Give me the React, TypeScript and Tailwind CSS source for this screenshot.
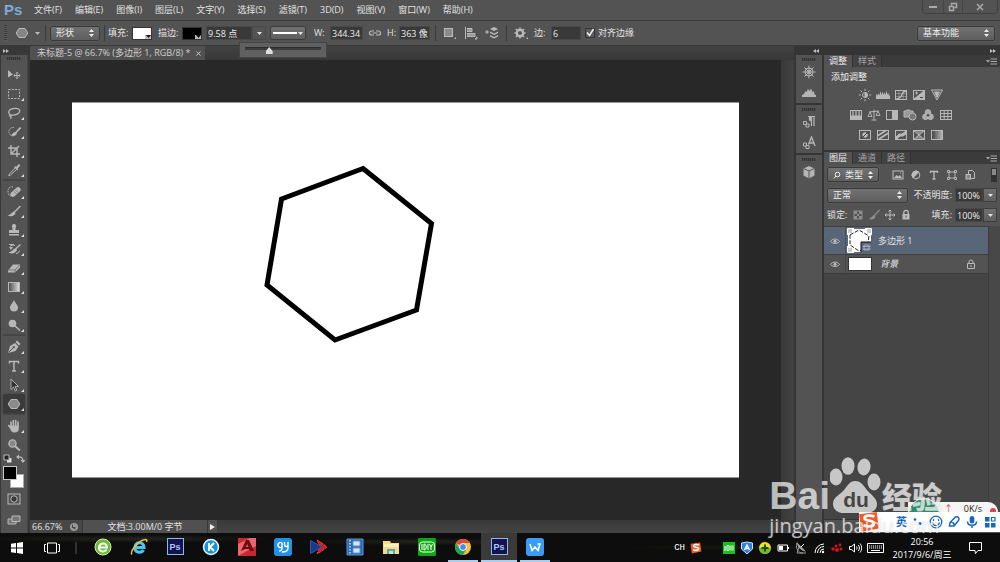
import { useState, type ReactNode } from "react";

const Svg = ({
  children,
  className = "size-[14px]",
  box = "0 0 14 14",
}: {
  children: ReactNode;
  className?: string;
  box?: string;
}) => (
  <svg
    viewBox={box}
    className={`shrink-0 ${className}`}
    fill="none"
    stroke="currentColor"
    aria-hidden="true"
  >
    {children}
  </svg>
);

const menus = [
  "文件(F)",
  "编辑(E)",
  "图像(I)",
  "图层(L)",
  "文字(Y)",
  "选择(S)",
  "滤镜(T)",
  "3D(D)",
  "视图(V)",
  "窗口(W)",
  "帮助(H)",
];

type Tool = { name: string; icon: ReactNode; more?: boolean };

const toolGroups: Tool[][] = [
  [
    {
      name: "移动工具",
      icon: (
        <>
          <path d="M1 2l5 4.500-5 3z" fill="currentColor" stroke="none" />
          <path d="M10 4.500v6M7 7.500h6M9 5.500l1-1.200 1 1.200M9 9.500l1 1.200 1-1.200M8 6.500l-1.200 1 1.200 1M12 6.500l1.200 1-1.200 1" />
        </>
      ),
    },
    {
      name: "矩形选框工具",
      more: true,
      icon: <rect x="1.500" y="2.500" width="11" height="9" strokeDasharray="2 1.300" />,
    },
    {
      name: "套索工具",
      more: true,
      icon: (
        <path
          d="M3.500 9C1 7.500 1 4.500 4 3.200S12 2 12.700 4.500 10 8.800 6 9.200c-2 .2-3.300-.4-3.300.5s1.500.6 1.500 1.700-1 1.300-1 1.300"
          strokeWidth="1.300"
        />
      ),
    },
    {
      name: "快速选择工具",
      more: true,
      icon: (
        <>
          <path d="M7 2.500A4.300 4.300 0 1 0 6.500 11" strokeDasharray="1.500 1" />
          <path d="M13.500 2.500L8.500 8" strokeWidth="1.700" />
          <path d="M9 7c-2 0-3 .8-5 3.500 3 1 5 .3 6-2.500z" fill="currentColor" stroke="none" />
        </>
      ),
    },
    {
      name: "裁剪工具",
      more: true,
      icon: <path d="M4 1v9h9M1 4h9v9M5 9l7-7" strokeWidth="1.400" />,
    },
    {
      name: "吸管工具",
      more: true,
      icon: (
        <>
          <path d="M8 5l-5.500 6-.8 1.800 1.800-.8L9.500 6.500" />
          <path d="M7 4l1-.8 1.300.6 2-2.300c1-1 2.600.5 1.700 1.500l-2.300 2.200.5 1.300-.9 1z" fill="currentColor" stroke="none" />
        </>
      ),
    },
  ],
  [
    {
      name: "污点修复画笔工具",
      more: true,
      icon: (
        <>
          <path d="M6 2C3 1 .5 3.500 1 7s2 4 3 4" strokeDasharray="1.500 1" />
          <rect x="2.500" y="4.500" width="12" height="5" rx="2.500" transform="rotate(-42 8.500 7)" fill="currentColor" stroke="none" />
          <path d="M7 6.500l2.500 2.500M8.500 5L11 7.500" stroke="#666" strokeWidth=".8" />
        </>
      ),
    },
    {
      name: "画笔工具",
      more: true,
      icon: (
        <>
          <path d="M13.500 2L7 8.500" strokeWidth="1.500" />
          <path d="M7.500 7.500C5 7.500 4.500 10.500.5 11.500c3 1.300 7 1 8-2.500z" fill="currentColor" stroke="none" />
        </>
      ),
    },
    {
      name: "仿制图章工具",
      more: true,
      icon: (
        <path
          d="M7 1a2 2 0 0 1 1.900 3L8.300 7H12v3H2V7h3.700l-.6-3A2 2 0 0 1 7 1zM2 11h10v1.500H2z"
          fill="currentColor"
          stroke="none"
        />
      ),
    },
    {
      name: "历史记录画笔工具",
      more: true,
      icon: (
        <>
          <path d="M2 2.500h5M3 4.500c1-1.500 3-1.500 5-1M9 11.500c2 0 3-1 3.500-3" />
          <path d="M13.500 2.500L8 7.500" strokeWidth="1.500" />
          <path d="M9 6.500c-3 0-3.500 3-7.500 4 3 1.600 7 1.200 8.500-2.500zM2 5h4L4 8z" fill="currentColor" stroke="none" />
        </>
      ),
    },
    {
      name: "橡皮擦工具",
      more: true,
      icon: (
        <>
          <path d="M1 9.500l5-6h7v3l-5 5H1z" fill="currentColor" stroke="none" />
          <path d="M1.500 9H8l4.500-5M8 9v2.500" stroke="#666" strokeWidth=".8" />
        </>
      ),
    },
    {
      name: "渐变工具",
      more: true,
      icon: (
        <>
          <defs>
            <linearGradient id="toolGradient">
              <stop stopColor="#4a4a4a" />
              <stop offset="1" stopColor="#e0e0e0" />
            </linearGradient>
          </defs>
          <rect x="1.500" y="2.500" width="11" height="9" fill="url(#toolGradient)" />
        </>
      ),
    },
    {
      name: "模糊工具",
      more: true,
      icon: <path d="M7 1c1 3 4 5 4 7.500a4 4 0 0 1-8 0C3 6 6 4 7 1z" fill="currentColor" stroke="none" />,
    },
    {
      name: "减淡工具",
      more: true,
      icon: (
        <>
          <circle cx="5.500" cy="5.500" r="3.800" fill="currentColor" stroke="none" />
          <path d="M8 8l5 4.500" strokeWidth="1.600" />
        </>
      ),
    },
  ],
  [
    {
      name: "钢笔工具",
      more: true,
      icon: (
        <>
          <path d="M1 13l2-7 5-3 3.500 3.500-3 4.500zM8.500 2l1.500-1.500 3.500 3.500L12 5.500z" fill="currentColor" stroke="none" />
          <path d="M1.500 12.500L6.500 7.500" stroke="#555" />
          <circle cx="6.800" cy="7.200" r=".8" stroke="#555" />
        </>
      ),
    },
    {
      name: "横排文字工具",
      more: true,
      icon: <path d="M2.500 4.500V2.500h9v2M7 2.500v9.500M5 12h4" strokeWidth="1.500" />,
    },
    {
      name: "路径选择工具",
      more: true,
      icon: <path d="M4 1v10.500l2.500-2.300 1.800 3.800 1.500-.8L8 8.500h3.500z" fill="#333" strokeWidth=".9" />,
    },
    {
      name: "多边形工具",
      more: true,
      icon: <path d="M4 2.500h6L12.800 7 10 11.500H4L1.200 7z" fill="#8b8b8b" />,
    },
  ],
  [
    {
      name: "抓手工具",
      more: true,
      icon: (
        <>
          <path d="M4 7V3M6.300 6.500V1.500M8.700 6.500v-5M11 7V3M1.700 6.500L4 9.500" strokeWidth="1.600" strokeLinecap="round" />
          <path d="M3.200 6.500h8.600V10c0 2-1.500 3.500-4.300 3.500S3.500 11 3 9.500z" fill="currentColor" stroke="none" />
        </>
      ),
    },
    {
      name: "缩放工具",
      icon: (
        <>
          <circle cx="5.500" cy="5.500" r="3.600" fill="#888" strokeWidth="1.300" />
          <path d="M8.300 8.300l4.500 4.200" strokeWidth="2" />
        </>
      ),
    },
  ],
];

type Glyph = { name: string; icon: ReactNode };

const frame = <rect x="1.500" y="2.500" width="11" height="9" />;

const adjustments: Glyph[][] = [
  [
    {
      name: "亮度/对比度",
      icon: (
        <>
          <circle cx="7" cy="7" r="2.500" />
          <path d="M7 4.500a2.500 2.500 0 0 1 0 5z" fill="currentColor" />
          <path d="M7 .8v2M7 11.200v2M.8 7h2M11.200 7h2M2.600 2.600L4 4M10 10l1.400 1.400M2.600 11.400L4 10M10 4l1.400-1.400" />
        </>
      ),
    },
    {
      name: "色阶",
      icon: <path d="M0 11V7l1-1 .8 2L2.500 5l1 2.500L4.500 3l1 4 1-3.500 1 3.500L8.500 4l1 3L10.500 2.500l1 4 1-1.500.5 3 1-1v4z" fill="currentColor" stroke="none" />,
    },
    {
      name: "曲线",
      icon: (
        <>
          {frame}
          <path d="M5 2.500v9M9 2.500v9M1.500 5.500h11M1.500 8.500h11" strokeWidth=".5" />
          <path d="M2 11c4 0 5-2 6-4.500S10 3 12.500 3" strokeWidth="1.300" />
        </>
      ),
    },
    {
      name: "曝光度",
      icon: (
        <>
          {frame}
          <path d="M12.500 2.500v9h-11z" fill="currentColor" />
          <path d="M3 5h3M4.500 3.500v3" />
          <path d="M8 9.500h3" stroke="#444" />
        </>
      ),
    },
    {
      name: "自然饱和度",
      icon: (
        <>
          <path d="M1.500 2h11L7 12z" />
          <path d="M4.500 4h5L7 9.500z" fill="currentColor" />
        </>
      ),
    },
  ],
  [
    {
      name: "色相/饱和度",
      icon: (
        <>
          {frame}
          <path d="M1.500 8h11v3.500h-11z" fill="currentColor" />
          <path d="M4 3v5M7 3v5M10 3v5" strokeWidth="1.300" />
        </>
      ),
    },
    {
      name: "色彩平衡",
      icon: (
        <>
          <path d="M7 1.500v10M4.500 12h5M2 4l10-1" />
          <path d="M3 4L1 8.500h4zM11 3L9 7.500h4z" strokeWidth=".9" />
        </>
      ),
    },
    {
      name: "黑白",
      icon: (
        <>
          {frame}
          <path d="M7 3h5.500v8.500H7z" fill="currentColor" stroke="none" />
        </>
      ),
    },
    {
      name: "照片滤镜",
      icon: (
        <>
          <path d="M1 3h2l.7-1h3l.7 1H10v6H1z" fill="#999" />
          <circle cx="9.500" cy="8.500" r="3.500" fill="#777" />
        </>
      ),
    },
    {
      name: "通道混合器",
      icon: (
        <>
          <circle cx="7" cy="4.500" r="2.800" fill="#ababab" />
          <circle cx="4.500" cy="8.800" r="2.800" fill="#ababab" />
          <circle cx="9.500" cy="8.800" r="2.800" fill="#ababab" />
          <circle cx="7" cy="7.300" r="1.200" fill="#444" stroke="none" />
        </>
      ),
    },
    {
      name: "颜色查找",
      icon: (
        <>
          <rect x="1.500" y="2.500" width="11" height="9" />
          <path d="M5.200 2.500v9M8.800 2.500v9M1.500 5.500h11M1.500 8.500h11" />
        </>
      ),
    },
  ],
  [
    {
      name: "反相",
      icon: (
        <>
          {frame}
          <circle cx="7" cy="7" r="2.700" fill="#bbb" stroke="none" />
          <path d="M3 11l8-8" stroke="#444" />
        </>
      ),
    },
    {
      name: "色调分离",
      icon: (
        <>
          {frame}
          <path d="M2 7.500l8-5M3 11l9.500-6" strokeWidth="1.800" />
        </>
      ),
    },
    {
      name: "阈值",
      icon: (
        <>
          {frame}
          <path d="M2 9l3-3h3l4-3v3L9 8H6l-3 3H2z" fill="currentColor" />
        </>
      ),
    },
    {
      name: "可选颜色",
      icon: (
        <>
          {frame}
          <path d="M1.500 2.500L7 7l5.500-4.500zM1.500 11.500L7 7l5.500 4.500z" fill="#888" />
        </>
      ),
    },
    {
      name: "渐变映射",
      icon: (
        <>
          <defs>
            <linearGradient id="mapGradient">
              <stop stopColor="#404040" />
              <stop offset="1" stopColor="#b8b8b8" />
            </linearGradient>
          </defs>
          <rect x="1.500" y="2.500" width="11" height="9" fill="url(#mapGradient)" />
        </>
      ),
    },
  ],
];

const filters: Glyph[] = [
  {
    name: "像素图层滤镜",
    icon: (
      <>
        <rect x="2" y="3" width="10" height="8" />
        <path d="M3 10l2.500-3 2 1.500L9 7l2 3z" fill="currentColor" stroke="none" />
        <path d="M9 5h1" />
      </>
    ),
  },
  {
    name: "调整图层滤镜",
    icon: (
      <>
        <circle cx="7" cy="7" r="3.800" />
        <path d="M4 9.700a4 4 0 0 1 5.700-5.600z" fill="currentColor" />
      </>
    ),
  },
  { name: "文字图层滤镜", icon: <path d="M3.500 5V3.500h7V5M7 3.500v7.500M5.500 11h3" strokeWidth="1.300" /> },
  {
    name: "形状图层滤镜",
    icon: <path d="M4 4h6v6H4zM2.500 2.500h2v2h-2zM9.500 2.500h2v2h-2zM2.500 9.500h2v2h-2zM9.500 9.500h2v2h-2z" strokeWidth=".9" />,
  },
  {
    name: "智能对象滤镜",
    icon: (
      <>
        <path d="M5.500 6V2.500h4l2 2v6H8" />
        <rect x="3" y="6.500" width="4.500" height="4.500" fill="#888" />
      </>
    ),
  },
];

const locks: Glyph[] = [
  {
    name: "锁定透明像素",
    icon: (
      <>
        <rect x="3" y="3" width="8" height="8" />
        <path d="M3 3h3v3H3zM8 3h3v3H8zM6 6h2v2H6zM3 8h3v3H3zM8 8h3v3H8z" fill="currentColor" stroke="none" />
      </>
    ),
  },
  {
    name: "锁定图像像素",
    icon: (
      <>
        <path d="M12.500 2L7 8" strokeWidth="1.200" />
        <path d="M7.500 7C5 7.500 4.500 10 1.500 11c3 1 6 .5 7-2z" fill="currentColor" stroke="none" />
      </>
    ),
  },
  {
    name: "锁定位置",
    icon: <path d="M7 2v10M2 7h10M5.500 3.500L7 2l1.500 1.500M5.500 10.500L7 12l1.500-1.500M3.500 5.500L2 7l1.500 1.500M10.500 5.500L12 7l-1.500 1.500" className="text-[#bdbdbd]" stroke="currentColor" />,
  },
  {
    name: "锁定全部",
    icon: (
      <g className="text-[#bdbdbd]" stroke="currentColor">
        <path d="M4.800 6V4.500a2.200 2.200 0 0 1 4.400 0V6" strokeWidth="1.300" />
        <path d="M3.500 6h7v5.500h-7z" fill="currentColor" stroke="none" />
        <path d="M7 7.500v2" stroke="#444" />
      </g>
    ),
  },
];

const Divider = () => <span className="h-4 w-px shrink-0 border-l border-[#3b3b3b]" />;

const Grip = () => (
  <span className="mx-auto h-[3px] w-[14px] shrink-0 bg-[repeating-linear-gradient(90deg,#333_0_1px,#484848_1px_2px)]" />
);

const Picker = ({
  label,
  options,
  className,
  search,
}: {
  label: string;
  options: string[];
  className: string;
  search?: boolean;
}) => (
  <label
    className={`flex h-[15px] shrink-0 items-center rounded-xs border border-[#393939] bg-linear-to-b from-[#727272] to-[#5e5e5e] px-[5px] text-[#ececec] shadow-[0_0_1px_#8a8a8a] ${className}`}
  >
    {search && (
      <Svg className="mr-1 size-2" box="0 0 8 8">
        <circle cx="4.500" cy="3.500" r="2.300" />
        <path d="M3 5L.8 7.500" />
      </Svg>
    )}
    <select aria-label={label} className="min-w-0 flex-1 appearance-none bg-transparent p-0 leading-3 outline-none">
      {options.map((o) => (
        <option key={o}>{o}</option>
      ))}
    </select>
    <Svg className="h-2 w-[5px]" box="0 0 5 8">
      <path d="M0 3l2.500-3L5 3zM0 5l2.500 3L5 5z" fill="currentColor" stroke="none" />
    </Svg>
  </label>
);

const Field = ({ label, value, className }: { label: string; value: string; className: string }) => (
  <input
    aria-label={label}
    defaultValue={value}
    className={`h-[14px] min-w-0 shrink-0 border border-[#484848] bg-[#393939] px-px text-[#ececec] outline-none ${className}`}
  />
);

const Caret = ({ className = "" }: { className?: string }) => (
  <Svg className={`h-[3px] w-[5px] ${className}`} box="0 0 5 3">
    <path d="M0 0h5L2.500 3z" fill="currentColor" stroke="none" />
  </Svg>
);

const Swatch = ({ label, color }: { label: string; color: string }) => (
  <button
    aria-label={label}
    className={`flex h-[13px] w-5 shrink-0 items-end justify-end border border-[#333] ${color}`}
  >
    <span className="flex h-1 w-[6px] items-center justify-center bg-[#bbb] text-[#111]">
      <Caret />
    </span>
  </button>
);

const MenuBar = () => (
  <header className="flex h-[21px] shrink-0 items-center border-b border-[#3a3a3a] pl-1">
    <span className="w-[30px] font-['Liberation_Sans'] text-[15px] leading-5 font-bold text-[#7cabdc]">Ps</span>
    <nav className="flex items-center gap-[13px]">
      {menus.map((m) => (
        <button key={m} className="whitespace-nowrap">
          {m}
        </button>
      ))}
    </nav>
    <div className="mr-[2px] mb-[6px] ml-auto flex h-[14px] rounded-b-sm border border-t-0 border-[#404040] text-[#aaa]">
      <button aria-label="最小化" className="flex w-5 items-center justify-center">
        <span className="h-[2px] w-2 bg-current" />
      </button>
      <button aria-label="还原" className="flex w-5 items-center justify-center border-x border-[#444]">
        <Svg className="size-[10px]" box="0 0 10 10">
          <path d="M3.500 3.500v-2h5v4h-2M1.500 4.500h4v4h-4z" strokeWidth="1.500" />
        </Svg>
      </button>
      <button aria-label="关闭" className="flex w-[34px] items-center justify-center">
        <Svg className="size-2" box="0 0 8 8">
          <path d="M1 1l6 6M7 1L1 7" strokeWidth="1.600" />
        </Svg>
      </button>
    </div>
  </header>
);

const OptionsBar = () => (
  <div className="relative flex h-[25px] shrink-0 items-center border-b border-[#393939] pr-[5px] pl-1">
    <span className="h-4 w-[3px] bg-[repeating-linear-gradient(#3b3b3b_0_1px,#5c5c5c_1px_2px)]" />
    <button aria-label="多边形工具预设" className="ml-2 flex items-center gap-[6px] text-[#bbb]">
      <Svg>
        <path d="M4 2.500h6L12.800 7 10 11.500H4L1.200 7z" fill="#858585" />
      </Svg>
      <Caret />
    </button>
    <div className="ml-[5px] flex items-center gap-1">
      <Divider />
      <Picker label="工具模式" options={["形状", "路径", "像素"]} className="w-[50px]" />
      <Divider />
    </div>
    <span className="ml-[3px] w-[24px] whitespace-nowrap">填充:</span>
    <Swatch label="填充" color="bg-white" />
    <span className="ml-[6px] w-[24px] whitespace-nowrap">描边:</span>
    <Swatch label="描边" color="bg-black" />
    <div className="ml-1 flex">
      <Field label="描边宽度" value="9.58 点" className="w-[46px]" />
      <button aria-label="描边宽度滑块" className="flex w-[14px] items-center justify-center border border-[#484848]">
        <Caret />
      </button>
    </div>
    <button
      aria-label="描边类型"
      className="ml-1 flex h-[14px] w-9 items-center gap-px rounded-xs border border-[#3b3b3b] bg-linear-to-b from-[#727272] to-[#5e5e5e] px-[2px]"
    >
      <span className="h-[2px] flex-1 bg-white" />
      <Caret />
    </button>
    <label className="ml-2 flex items-center">
      <span className="w-4">W:</span>
      <Field label="宽度" value="344.34" className="w-[33px]" />
    </label>
    <button aria-label="链接宽高" className="mx-[5px] text-[#bbb]">
      <Svg>
        <path d="M6 5H3.500a2 2 0 0 0 0 4H6M8 5h2.500a2 2 0 0 1 0 4H8M4.500 7h5" strokeWidth="1.200" />
      </Svg>
    </button>
    <label className="flex items-center">
      <span className="w-3">H:</span>
      <Field label="高度" value="363 像素" className="w-[31px]" />
    </label>
    <div className="ml-[5px] flex items-center gap-[7px] text-[#bbb]">
      <Divider />
      <button aria-label="路径操作" className="flex items-end">
        <Svg>
          <rect x="1.500" y="2.500" width="8" height="8" fill="#8b8b8b" />
          <path d="M11 13h2v-2z" fill="currentColor" stroke="none" />
        </Svg>
      </button>
      <button aria-label="路径对齐方式">
        <Svg>
          <path d="M1.500 1v12" />
          <path d="M3 2h5v3.500H3zM3 7h8v3.500H3z" fill="#999" stroke="none" />
          <path d="M3 2.500h5v3H3M3 7.500h8v3H3M11 13h2v-2z" />
        </Svg>
      </button>
      <button aria-label="路径排列方式">
        <Svg>
          <path d="M0 6h4M2 4v4" />
          <path d="M9 1l4 2-4 2-4-2zM5 5.500l4 2 4-2v1.500L9 9 5 7zM5 9l4 2 4-2v1.500l-4 2-4-2z" fill="currentColor" stroke="none" />
        </Svg>
      </button>
      <Divider />
      <button aria-label="多边形选项">
        <Svg>
          <circle cx="6" cy="7" r="3.200" strokeWidth="2.200" />
          <path d="M6 1.500v2M6 10.500v2M.5 7h2M9.500 7h2M2 3l1.500 1.500M8.500 9.500L10 11M2 11l1.500-1.500M8.500 4.500L10 3" strokeWidth="1.600" />
          <path d="M12 13h2v-2z" fill="currentColor" stroke="none" />
        </Svg>
      </button>
    </div>
    <label className="ml-[6px] flex items-center">
      <span className="w-[17px] whitespace-nowrap">边:</span>
      <Field label="边数" value="6" className="w-[30px]" />
    </label>
    <label className="ml-1 flex items-center gap-[3px] whitespace-nowrap">
      <span className="relative flex size-[10px] items-center justify-center">
        <input type="checkbox" defaultChecked className="peer size-[10px] appearance-none border border-[#333] bg-[#5c5c5c]" />
        <Svg className="pointer-events-none absolute size-[10px] opacity-0 peer-checked:opacity-100" box="0 0 10 10">
          <path d="M2 4.500l2.500 3L8.500 1" stroke="#f0f0f0" strokeWidth="1.500" />
        </Svg>
      </span>
      对齐边缘
    </label>
    <div className="ml-auto">
      <Picker label="工作区" options={["基本功能"]} className="w-[78px]" />
    </div>
    {/* stroke width popup */}
    <div className="absolute top-[21px] left-[239px] z-10 flex h-4 w-[88px] items-start border border-[#444] bg-[#606060] px-[5px] pt-px">
      <input
        type="range"
        aria-label="描边宽度"
        defaultValue={30}
        className="h-[9px] w-full appearance-none bg-transparent [&::-webkit-slider-runnable-track]:h-[3px] [&::-webkit-slider-runnable-track]:border-t [&::-webkit-slider-runnable-track]:border-[#2e2e2e] [&::-webkit-slider-runnable-track]:bg-[#3c3c3c] [&::-webkit-slider-thumb]:-mt-px [&::-webkit-slider-thumb]:size-[7px] [&::-webkit-slider-thumb]:appearance-none [&::-webkit-slider-thumb]:bg-[#ddd] [&::-webkit-slider-thumb]:[clip-path:polygon(50%_0,100%_60%,100%_100%,0_100%,0_60%)]"
      />
    </div>
  </div>
);

const Toolbox = () => {
  const [active, setActive] = useState("多边形工具");

  return (
    <aside className="flex w-[30px] shrink-0 flex-col bg-[#383838] pr-[2px] pl-px text-[#b8b8b8]">
      <button aria-label="展开工具栏" className="flex h-[9px] items-center pl-[2px]">
        <Svg className="h-1 w-[6px]" box="0 0 6 4">
          <path d="M0 0l3 2-3 2zM3 0l3 2-3 2z" fill="currentColor" stroke="none" />
        </Svg>
      </button>
      <div className="flex flex-1 flex-col border-r border-[#444] bg-[#535353] px-[2px]">
        <div className="flex h-[10px] pt-[2px]">
          <Grip />
        </div>
        {toolGroups.map((group, i) => (
          <div key={i} className={i ? "border-t-2 border-[#464646] pt-px" : ""}>
            {group.map((t) => (
              <button
                key={t.name}
                aria-label={t.name}
                onClick={() => setActive(t.name)}
                className={`relative flex h-[19px] w-full items-center justify-center rounded-xs ${
                  active === t.name ? "bg-[#3a3a3a] shadow-[0_0_1px_#222]" : ""
                }`}
              >
                <Svg>{t.icon}</Svg>
                {t.more && (
                  <Svg className="absolute right-px bottom-[2px] size-[3px]" box="0 0 3 3">
                    <path d="M3 0v3H0z" fill="#ddd" stroke="none" />
                  </Svg>
                )}
              </button>
            ))}
          </div>
        ))}
        <div className="flex h-3 items-start justify-between">
          <button aria-label="默认前景色和背景色">
            <Svg className="size-[9px]" box="0 0 9 9">
              <path d="M4 4h4.500v4.500H4z" fill="#ddd" stroke="none" />
              <path d="M1 1h5v5H1z" fill="#222" />
            </Svg>
          </button>
          <button aria-label="切换前景色和背景色">
            <Svg className="size-[9px]" box="0 0 9 9">
              <path d="M2 3c3-.5 5 1 5 4" strokeWidth="1.200" />
              <path d="M0 3l3-2.500v5zM4.500 6h5L7 9z" fill="currentColor" stroke="none" />
            </Svg>
          </button>
        </div>
        <div className="flex h-[22px]">
          <button aria-label="前景色" className="z-10 size-[14px] border border-[#c8c8c8] bg-black" />
          <button aria-label="背景色" className="-ml-[7px] size-[14px] self-end border border-[#aaa] bg-white" />
        </div>
        <button aria-label="快速蒙版" className="mt-1 flex h-[13px] items-center justify-center">
          <Svg>
            <rect x="1" y="2" width="12" height="10" />
            <circle cx="7" cy="7" r="3.200" fill="#383838" />
          </Svg>
        </button>
        <button aria-label="屏幕模式" className="mt-2 flex h-[13px] items-center justify-center">
          <Svg>
            <path d="M1 6h8v5H1z" fill="#777" />
            <path d="M5 3h8v5.500H5z" fill="#777" />
          </Svg>
        </button>
      </div>
    </aside>
  );
};

const Workspace = () => (
  <main className="flex min-w-0 flex-1 flex-col bg-[#404040]">
    <div className="flex h-[14px] shrink-0 items-stretch bg-linear-to-b from-[#424242] to-[#383838]">
      <div className="flex items-center gap-[6px] bg-[#515151] pr-1 pl-[7px] whitespace-nowrap text-[#cfcfcf]">
        未标题-5 @ 66.7% (多边形 1, RGB/8) *
        <button aria-label="关闭文档">
          <Svg className="size-[5px]" box="0 0 5 5">
            <path d="M.5.5l4 4M4.500.5l-4 4" />
          </Svg>
        </button>
      </div>
    </div>
    <div className="flex min-h-0 flex-1">
      <div className="flex min-w-0 flex-1 bg-[#282828] p-[42px]">
        <svg
          viewBox="0 0 667 375"
          preserveAspectRatio="xMidYMid meet"
          className="h-full w-full"
          role="img"
          aria-label="多边形 1"
        >
          <rect width="667" height="375" fill="#fff" />
          <path d="M291 66L359.500 121 344.500 207.500 263 237.500 195 182.500 209.500 96.500z" fill="#fff" stroke="#000" strokeWidth="5" />
        </svg>
      </div>
      <div className="w-[13px] bg-linear-to-r from-[#383838] to-[#424242]" />
    </div>
    <footer className="flex h-[13px] shrink-0 items-center bg-linear-to-b from-[#3a3a3a] to-[#434343]">
      <span className="flex h-full w-[35px] items-center bg-[#474747] pl-[2px]">66.67%</span>
      <span className="flex h-full w-[18px] items-center justify-center border-r border-[#383838] bg-[#474747]">
        <Svg className="size-[10px]" box="0 0 10 10">
          <circle cx="5" cy="5" r="4" fill="#999" stroke="none" />
          <path d="M3.500 2.500v3h3M6.500 7l-3-1.500" stroke="#444" />
        </Svg>
      </span>
      <span className="flex h-full w-[125px] items-center justify-center border-r border-[#383838] bg-[#505050] whitespace-nowrap">
        文档:3.00M/0 字节
      </span>
      <button aria-label="状态栏菜单" className="flex h-full w-[9px] items-center justify-center bg-[#505050]">
        <Svg className="h-[6px] w-[5px]" box="0 0 5 6">
          <path d="M0 0l5 3-5 3z" fill="#eee" stroke="none" />
        </Svg>
      </button>
    </footer>
  </main>
);

const dockGroups: Glyph[][] = [
  [
    {
      name: "导航器",
      icon: (
        <>
          <circle cx="7" cy="7" r="4" />
          <circle cx="7" cy="7" r="1.300" fill="currentColor" />
          <path d="M7 .5v13M.5 7h13M2.400 2.400l9.200 9.200M11.600 2.400l-9.200 9.200" />
        </>
      ),
    },
    {
      name: "直方图",
      icon: <path d="M0 11V9l2-1 1.500-3 1 1L6 3l1.500 2L9 2.500 10.500 6l1.500-.5.500 3L14 9v2z" fill="currentColor" stroke="none" />,
    },
  ],
  [
    {
      name: "段落样式",
      icon: (
        <>
          <path d="M6 1.500h7M9.500 1.500V11M12 1.500V11" strokeWidth="1.200" />
          <path d="M9.500 1a2.700 2.700 0 0 0 0 5.500z" fill="currentColor" stroke="none" />
          <path d="M1.500 6.500h3v3h-3zM4 9h3v3H4z" fill="#535353" />
        </>
      ),
    },
    {
      name: "字符样式",
      icon: (
        <>
          <path d="M6.500 8.500L9.500 1l3.500 9M7.500 7h4.500" strokeWidth="1.400" />
          <path d="M1.500 7h3v3h-3zM4 9.500h3v3H4z" fill="#535353" />
        </>
      ),
    },
  ],
  [
    {
      name: "3D",
      icon: (
        <>
          <path d="M7 1l5.500 2.500v7L7 13.500l-5.500-3v-7z" fill="currentColor" stroke="none" />
          <path d="M1.500 3.500L7 6l5.500-2.500M7 6v7.500" stroke="#555" />
        </>
      ),
    },
  ],
];

const Dock = () => (
  <div className="flex w-[30px] flex-col gap-[2px] px-[2px] text-[#b5b5b5]">
    {dockGroups.map((group, i) => (
      <div key={i} className="flex flex-col bg-[#535353] pt-[3px] last:flex-1">
        <Grip />
        <div className="mt-[2px] flex flex-col gap-[3px] pb-px">
          {group.map((g) => (
            <button key={g.name} aria-label={g.name} className="flex h-[18px] items-center justify-center">
              <Svg>{g.icon}</Svg>
            </button>
          ))}
        </div>
      </div>
    ))}
  </div>
);

const PanelTabs = ({ tabs }: { tabs: string[] }) => (
  <div className="flex h-3 shrink-0 items-stretch bg-[#3b3b3b]">
    {tabs.map((t, i) => (
      <button
        key={t}
        className={`w-[29px] border-r border-[#333] ${i ? "bg-[#424242] text-[#a2a2a2]" : "bg-[#535353] text-[#eee]"}`}
      >
        {t}
      </button>
    ))}
    <button aria-label="面板菜单" className="mr-[3px] ml-auto text-[#aaa]">
      <Svg className="h-[7px] w-[11px]" box="0 0 11 7">
        <path d="M0 2h4L2 4.500z" fill="currentColor" stroke="none" />
        <path d="M4.500 1H11M4.500 3.500H11M4.500 6H11" />
      </Svg>
    </button>
  </div>
);

const Percent = ({ label }: { label: string }) => (
  <div className="ml-auto flex items-center">
    <label className="flex items-center gap-[3px] whitespace-nowrap">
      {label}:
      <Field label={label} value="100%" className="w-7" />
    </label>
    <button
      aria-label={`${label}滑块`}
      className="flex h-[14px] w-[14px] items-center justify-center border border-[#3f3f3f] bg-linear-to-b from-[#707070] to-[#5e5e5e]"
    >
      <Caret />
    </button>
  </div>
);

const Eye = () => (
  <button aria-label="图层可见性" className="flex w-[21px] shrink-0 items-center justify-center text-[#c0c0c0]">
    <Svg className="h-2 w-[10px]" box="0 0 10 8">
      <path d="M.5 4.500C2 1.500 7.500 1 9.500 4.500 7.500 7 2.500 7 .5 4.500z" />
      <circle cx="5" cy="4.200" r="1.500" fill="currentColor" stroke="none" />
    </Svg>
  </button>
);

const LayersPanel = () => (
  <section className="flex min-h-0 flex-1 flex-col">
    <PanelTabs tabs={["图层", "通道", "路径"]} />
    <div className="flex flex-col gap-[6px] bg-[#535353] px-[3px] pt-[3px] pb-1">
      <div className="flex h-[15px] items-center">
        <Picker label="图层滤镜类型" options={["类型"]} className="w-[52px]" search />
        <div className="ml-3 flex gap-1 text-[#bdbdbd]">
          {filters.map((f) => (
            <button key={f.name} aria-label={f.name}>
              <Svg>{f.icon}</Svg>
            </button>
          ))}
        </div>
        <button aria-label="打开或关闭图层滤镜" className="ml-auto h-[14px] w-[6px] border border-[#333] bg-linear-to-b from-[#888] from-50% to-[#333] to-50%" />
      </div>
      <div className="flex h-[14px] items-center">
        <Picker label="混合模式" options={["正常", "溶解", "正片叠底"]} className="w-[81px]" />
        <Percent label="不透明度" />
      </div>
      <div className="flex h-[14px] items-center">
        锁定:
        <div className="ml-1 flex gap-[2px] text-[#8c8c8c]">
          {locks.map((l) => (
            <button key={l.name} aria-label={l.name}>
              <Svg>{l.icon}</Svg>
            </button>
          ))}
        </div>
        <Percent label="填充" />
      </div>
    </div>
    <div className="flex flex-1 bg-[#454545]">
      <ul className="flex-1">
        <li className="flex h-[29px] items-stretch border-y border-[#404040] bg-[#596678]">
          <Eye />
          <button className="flex flex-1 items-center gap-[6px] border-l border-[#49525f] pl-px">
            <Svg className="size-[25px]" box="0 0 25 25">
              <path d="M1 1h23v23H1z" fill="#fff" stroke="none" />
              <path d="M1 1h4v4H1zM20 1h4v4h-4zM1 20h4v4H1z" fill="#ccc" stroke="none" />
              <path d="M3 7l9-5 10 6-2 13-8 2-9-6z" fill="#fff" stroke="#222" strokeDasharray="4 1.500" />
              <path d="M.5 7V.5H7M18 .5h6.500V7M.5 18v6.500H7" stroke="#fff" />
              <path d="M14 14h10v10H14z" fill="#596678" stroke="none" />
              <path d="M14 24V14h10" stroke="#111" />
              <path d="M17 17h5v5h-5zM15.500 18.500h8M15.500 21h8" stroke="#aebccd" strokeWidth=".8" />
            </Svg>
            多边形 1
          </button>
        </li>
        <li className="flex h-[19px] items-stretch border-b border-[#3c3c3c] bg-[#535353]">
          <Eye />
          <button className="flex flex-1 items-center gap-2 border-l border-[#444] pr-3 pl-[2px] italic">
            <span className="h-[14px] w-6 border border-[#333] bg-white" />
            背景
            <Svg className="ml-auto size-[10px] text-[#bbb]" box="0 0 10 10">
              <path d="M3 4.500V3a2 2 0 0 1 4 0v1.500M1.500 4.500h7v5h-7zM5 6v2" />
            </Svg>
          </button>
        </li>
      </ul>
      <div className="w-3 border-l border-[#3c3c3c] bg-[#484848]" />
    </div>
    <div className="h-[14px] border-t border-[#333] bg-[#535353]" />
  </section>
);

const Panels = () => (
  <div className="flex w-[176px] min-w-0 flex-col gap-[2px]">
    <section className="flex flex-col bg-[#535353]">
      <PanelTabs tabs={["调整", "样式"]} />
      <p className="pt-[3px] pl-[7px] leading-[13px] text-[#eee]">添加调整</p>
      <div className="ml-6 flex w-[106px] flex-col items-center gap-[6px] pt-[5px] pb-2 text-[#b8b8b8]">
        {adjustments.map((row, i) => (
          <div key={i} className="flex gap-1">
            {row.map((a) => (
              <button key={a.name} aria-label={a.name}>
                <Svg>{a.icon}</Svg>
              </button>
            ))}
          </div>
        ))}
      </div>
    </section>
    <LayersPanel />
  </div>
);

const Ps = () => (
  <span className="flex size-[17px] items-center justify-center border border-[#8fb8ee] bg-[#14124f] font-['Liberation_Sans'] text-[9px] font-bold text-[#a9c9f5]">
    Ps
  </span>
);

const apps: { name: string; icon: ReactNode; state?: "open" | "active" }[] = [
  {
    name: "360浏览器",
    icon: (
      <>
        <circle cx="9" cy="9" r="8" fill="#68bd2c" stroke="#d5f0bd" />
        <path d="M4.500 9.500h8.500c0-5-7-5.500-8-.5-.8 5 6 5.500 7.500 2.500" stroke="#fff" strokeWidth="2" />
      </>
    ),
  },
  {
    name: "Internet Explorer",
    icon: (
      <>
        <path d="M4.500 9.500h9.500c0-6-8-6.500-9-.5-.8 6 6.500 6.500 8.500 3" stroke="#4cc3f5" strokeWidth="3" />
        <path d="M2 16.500C-.5 14 9 1.500 15.500 1.500c1.500 0 1.500 1 1 2.500" stroke="#f4c136" strokeWidth="1.500" />
      </>
    ),
  },
  { name: "Photoshop", icon: null },
  {
    name: "酷狗音乐",
    icon: (
      <>
        <circle cx="9" cy="9" r="7.500" fill="#1593dd" stroke="#eaf6ff" strokeWidth="1.500" />
        <path d="M7 5v8M12 5L8 9l4 4" stroke="#fff" strokeWidth="2" />
      </>
    ),
  },
  {
    name: "AutoCAD",
    icon: (
      <>
        <path d="M0 0h18v18H0z" fill="#cb2730" stroke="none" />
        <path d="M0 18V6L12 0h6v8z" fill="#e9686d" stroke="none" />
        <path d="M8 2h3l5 11h-4l-1-2H7l-4 2z" fill="#6e0b10" stroke="none" />
        <path d="M7.500 9l2-3 1 3z" fill="#e05a60" stroke="none" />
      </>
    ),
  },
  {
    name: "应用",
    icon: (
      <>
        <rect width="18" height="18" rx="3" fill="#2191ee" stroke="none" />
        <path d="M8 5a2.500 2.500 0 1 0 0 4V5c0 5 1 8-3 8M10.500 4v3c0 2 3.500 2 3.500 0V4v6c0 3-3 4-6 4" stroke="#fff" strokeWidth="1.400" />
      </>
    ),
  },
  {
    name: "播放器",
    icon: (
      <>
        <path d="M7 2l5 3 5 4-5 4-5 3 3-7z" fill="#d01f28" stroke="#e83c45" strokeDasharray="3 1" />
        <path d="M.5 2.500L12 9 .5 15.500z" fill="#1b3a85" stroke="#2f57b0" />
      </>
    ),
  },
  {
    name: "视频编辑",
    icon: (
      <>
        <path d="M1 1h16v16H1z" fill="#2869b5" stroke="#5f97d2" />
        <path d="M7 3h7v5H7zM7 10h7v5H7z" fill="#d1e7f7" stroke="#6792c5" />
        <path d="M4 2v14" stroke="#cfe0f4" strokeWidth="1.500" strokeDasharray="1.500 1.500" />
      </>
    ),
  },
  {
    name: "文件资源管理器",
    icon: (
      <>
        <path d="M1 3h7l1 2h8v11H1z" fill="#f8da80" stroke="none" />
        <path d="M2 6h14v3H2z" fill="#fdf0b8" stroke="none" />
        <path d="M5 16v-5h8v5h-2v-3H7v3z" fill="#42acdc" stroke="none" />
      </>
    ),
  },
  {
    name: "爱奇艺",
    icon: (
      <>
        <rect width="18" height="18" rx="1.500" fill="#0aa811" stroke="none" />
        <rect x="1.500" y="4" width="15" height="10" rx="3" stroke="#fff" />
        <path d="M4 6v6M6 6v6c3 0 3-6 0-6M10 6v6M11.500 6l1.500 3 1.500-3M13 9v3" stroke="#fff" />
      </>
    ),
  },
  {
    name: "Chrome",
    state: "open",
    icon: (
      <>
        <circle cx="9" cy="9" r="8" fill="#f7c42c" stroke="none" />
        <path d="M9 9L2.100 5A8 8 0 0 1 16 5H9z" fill="#dd4b3e" stroke="none" />
        <path d="M2.100 5A8 8 0 0 0 9 17l3.500-6L6 11z" fill="#21a35b" stroke="none" />
        <circle cx="9" cy="9" r="3.500" fill="#4a8af4" stroke="#fff" />
      </>
    ),
  },
  { name: "Photoshop", state: "active", icon: null },
  {
    name: "WPS",
    state: "open",
    icon: (
      <>
        <rect width="18" height="18" rx="3" fill="#3b9cf8" stroke="none" />
        <path d="M4 6l2 6.500L9 9l3 3.500L14 6h-2.500" stroke="#fff" strokeWidth="1.500" />
      </>
    ),
  },
];

const SogouMark = ({ className }: { className: string }) => (
  <Svg className={className} box="0 0 20 20">
    <path d="M1 3l16-2 2 15-16 3z" fill="#ef5a28" stroke="none" />
    <path d="M15 5c-4-1.500-9-1-9 1.500 0 3 9 1.500 8.500 5-.5 3-6 3-9.500 1.500" stroke="#fff" strokeWidth="2.600" />
  </Svg>
);

const tray: Glyph[] = [
  {
    name: "爱奇艺",
    icon: (
      <>
        <path d="M1 1h12v12H1z" fill="#15c21c" stroke="none" />
        <path d="M3 5v5M5 4.500h2v5H5zM9 4.500v5M11 4.500v5" stroke="#fff" />
      </>
    ),
  },
  {
    name: "安全",
    icon: (
      <>
        <path d="M1.500 2L7 1l5.500 1v6L7 13 1.500 8z" fill="#2f7de0" stroke="#cfe3fa" />
        <path d="M4.500 9L7 4l2.500 5M5.500 7.500h3" stroke="#fff" strokeWidth="1.400" />
      </>
    ),
  },
  {
    name: "加速球",
    icon: (
      <>
        <circle cx="7" cy="7" r="6" fill="#f6dc2d" stroke="none" />
        <path d="M1 7a6 6 0 0 0 12 0z" fill="#74b82c" stroke="none" />
        <path d="M7 3.500v7M3.500 7h7" stroke="#15500f" strokeWidth="2" />
      </>
    ),
  },
  {
    name: "电池",
    icon: (
      <>
        <path d="M2 4h9.500v6H2zM12.500 6v2" />
        <path d="M3 5h4v4H3z" fill="currentColor" stroke="none" />
      </>
    ),
  },
  {
    name: "触控板",
    icon: (
      <>
        <path d="M3 1.500C1.500 6 3 10 7 12h5M5 6l-2 6h6" stroke="#999" />
        <path d="M3 1.500C3 6 7 10 12 10.500z" fill="#aaa" stroke="none" />
        <path d="M7 6l3-3" />
      </>
    ),
  },
  {
    name: "网络",
    icon: (
      <>
        <path d="M3 12A9 9 0 0 1 12 3M5.500 12A6.500 6.500 0 0 1 12 5.500M8 12a4 4 0 0 1 4-4" />
        <circle cx="11" cy="11" r="1.200" fill="currentColor" stroke="none" />
      </>
    ),
  },
  {
    name: "红点",
    icon: (
      <g fill="#c9151c" stroke="none">
        <circle cx="3" cy="8" r="1.700" />
        <circle cx="6" cy="5" r="1.500" />
        <circle cx="10" cy="4" r="1.400" />
        <circle cx="7" cy="9" r="2" />
        <circle cx="11" cy="8" r="1.500" />
      </g>
    ),
  },
  {
    name: "音量",
    icon: (
      <path d="M1.500 5.500v3h2L6.500 11V3l-3 2.500zM8.500 5.500c.8 1 .8 2 0 3M10.300 4c1.500 2 1.500 4 0 6M12 2.500c2.200 3 2.200 6 0 9" />
    ),
  },
];

const Taskbar = () => (
  <footer className="flex h-[29px] shrink-0 items-stretch bg-[radial-gradient(ellipse_at_42%_30%,#22241d_0,transparent_14%),radial-gradient(ellipse_at_13%_20%,#24241f_0,transparent_12%),radial-gradient(ellipse_at_75%_50%,#17190f_0,transparent_14%)] bg-[#0c0d0c] text-white">
    <button aria-label="开始" className="flex w-[34px] items-center justify-center">
      <Svg className="size-3" box="0 0 12 12">
        <path d="M0 1.800L5 1v4.500H0zM6 .9L12 0v5.500H6zM0 6.500h5V11l-5-.8zM6 6.500h6V12l-6-.9z" fill="currentColor" stroke="none" />
      </Svg>
    </button>
    <button aria-label="任务视图" className="flex w-9 items-center justify-center">
      <Svg className="h-3 w-4" box="0 0 16 12">
        <path d="M3.500 1h9v10h-9zM2 2.500H.5v7H2M14 2.500h1.500v7H14" />
      </Svg>
    </button>
    <span className="mr-2 ml-[5px] h-3 w-[2px] self-center bg-[#333]" />
    {apps.map((a, i) => (
      <button
        key={i}
        aria-label={a.name}
        className={`flex w-9 flex-col items-center ${a.state === "active" ? "bg-[#3a3b39]" : ""}`}
      >
        <span className="flex flex-1 items-center">
          {a.icon ? (
            <Svg className="size-[18px]" box="0 0 18 18">
              {a.icon}
            </Svg>
          ) : (
            <Ps />
          )}
        </span>
        <span
          className={`h-[2px] ${a.state === "active" ? "w-full bg-[#a9cdee]" : "w-[30px]"} ${
            a.state === "open" ? "bg-[#a9cdee]" : ""
          }`}
        />
      </button>
    ))}
    <div className="ml-auto flex items-center">
      <button className="mr-[5px] font-['Liberation_Mono'] text-[9px]">CH</button>
      <SogouMark className="mr-5 size-3" />
      <div className="flex gap-1">
        {tray.map((t) => (
          <button key={t.name} aria-label={t.name}>
            <Svg>{t.icon}</Svg>
          </button>
        ))}
      </div>
      <button aria-label="键盘" className="mr-[2px] ml-[5px]">
        <Svg className="h-[10px] w-[17px]" box="0 0 17 10">
          <path d="M.5.5h16v9H.5z" />
          <path d="M2 3h13M2 5h13" strokeDasharray="1.200 .8" />
          <path d="M4 7.500h9" />
        </Svg>
      </button>
      <time className="w-[72px] text-center leading-[13px] whitespace-nowrap">
        20:56
        <br />
        2017/9/6/周三
      </time>
      <button aria-label="通知" className="mr-[18px] ml-[11px]">
        <Svg className="size-[13px]" box="0 0 13 13">
          <path d="M.5 1.500h12v8H9l-2.500 3-.5-3H.5z" />
        </Svg>
      </button>
    </div>
  </footer>
);

const imeButtons: Glyph[] = [
  {
    name: "标点",
    icon: (
      <g fill="currentColor" stroke="none">
        <circle cx="4" cy="4.500" r="1.300" />
        <circle cx="9" cy="8.500" r="1.500" />
      </g>
    ),
  },
  {
    name: "表情",
    icon: (
      <>
        <circle cx="7" cy="7" r="5.800" strokeWidth="1.300" />
        <path d="M3.500 7.500c1 4 6 4 7 0M4.500 4v2M9.500 4v2" strokeWidth="1.200" />
      </>
    ),
  },
  {
    name: "手写",
    icon: <path d="M8.500 2c2.500-1 4.500 1 3 3.500L7 11H2.500L3 7.500zM3 7.500C6 7 7.500 8 7 11" strokeWidth="1.500" />,
  },
  {
    name: "语音",
    icon: (
      <>
        <rect x="4.700" y="1" width="4.600" height="7.500" rx="2.300" fill="currentColor" stroke="none" />
        <path d="M2.500 6.500c0 5 9 5 9 0M7 10.500V13" strokeWidth="1.500" />
      </>
    ),
  },
  {
    name: "工具箱",
    icon: (
      <>
        <path d="M2 2h4.500v4.500H2zM2 8h4.500v4.500H2zM8 8h4.500v4.500H8z" fill="currentColor" stroke="none" />
        <path d="M8.500 2.500h3.500V6H8.500z" strokeWidth="1.200" />
      </>
    ),
  },
];

const ImeBar = () => (
  <div className="absolute right-0 bottom-[30px] flex flex-col items-end">
    {/* speed widget, its lower half sits behind the input bar */}
    <div className="mr-[2px] flex h-[10px] w-[90px] items-start rounded-tr-xl bg-[#f6f6f6] text-[#222]">
      <span className="-mt-1 size-8 shrink-0 rounded-full border border-white bg-[#2d8a68]" />
      <span className="mt-px ml-1 text-[#e34b3c]">↑</span>
      <span className="mt-px ml-auto">0K/s</span>
      <span className="mt-[6px] mr-[2px] ml-2 h-2 w-[6px] rounded-full bg-[#d9454f]" />
    </div>
    <div className="relative flex h-5 items-center gap-1 bg-white pr-[3px] text-[#1767c0]">
      <SogouMark className="-ml-px size-[22px]" />
      <button className="ml-3 text-[11px] font-bold">英</button>
      {imeButtons.map((b) => (
        <button key={b.name} aria-label={b.name}>
          <Svg>{b.icon}</Svg>
        </button>
      ))}
    </div>
  </div>
);

const Watermark = () => (
  <div className="pointer-events-none absolute right-[58px] bottom-6 flex flex-col text-white/70">
    <div className="flex h-[60px] items-end">
      <span className="font-['Liberation_Sans'] text-[39px] leading-[36px] font-bold">Bai</span>
      <span className="relative flex w-[52px] items-end justify-center">
        <Svg className="h-[57px] w-[52px]" box="2 2 52 57">
          <g fill="currentColor" stroke="none">
            <ellipse cx="8" cy="22" rx="6.500" ry="8.500" />
            <ellipse cx="20" cy="11" rx="6.500" ry="8.800" />
            <ellipse cx="36" cy="12" rx="6.500" ry="8.500" transform="rotate(10 36 12)" />
            <ellipse cx="46" cy="27" rx="6.500" ry="8.500" />
            <path d="M27 26c6 0 9 5 12 9s10 8 10 14-5 9-11 9H16c-7 0-11-4-11-9 0-7 7-9 11-14s6-9 11-9z" />
          </g>
        </Svg>
        <span className="absolute bottom-0 font-['Liberation_Sans'] text-[21px] leading-7 font-bold text-[#444]">du</span>
      </span>
      <span className="pb-px text-[30px] leading-[32px] font-black [text-shadow:0_0_2px_#8886]">经验</span>
    </div>
    <span className="text-xl leading-6 [text-shadow:0_0_2px_#8886]">jingyan.baidu.com</span>
  </div>
);

export default function App() {
  return (
    <div className="relative flex h-screen flex-col overflow-hidden bg-[#535353] font-['Open_Sans','Noto_Sans_CJK_SC',sans-serif] text-[9px] leading-3 text-[#e2e2e2]">
      <MenuBar />
      <OptionsBar />
      <div className="flex min-h-0 flex-1">
        <Toolbox />
        <Workspace />
        <div className="flex flex-col bg-[#353535]">
          <div className="flex h-[9px] shrink-0 items-center pr-1 text-[#bbb]">
            <button aria-label="展开面板" className="ml-[19px]">
              <Svg className="h-1 w-[6px]" box="0 0 6 4">
                <path d="M3 0L0 2l3 2zM6 0L3 2l3 2z" fill="currentColor" stroke="none" />
              </Svg>
            </button>
            <button aria-label="折叠为图标" className="ml-auto">
              <Svg className="h-1 w-[6px]" box="0 0 6 4">
                <path d="M0 0l3 2-3 2zM3 0l3 2-3 2z" fill="currentColor" stroke="none" />
              </Svg>
            </button>
          </div>
          <div className="flex min-h-0 flex-1">
            <Dock />
            <Panels />
          </div>
        </div>
      </div>
      <Taskbar />
      <ImeBar />
      <Watermark />
    </div>
  );
}
